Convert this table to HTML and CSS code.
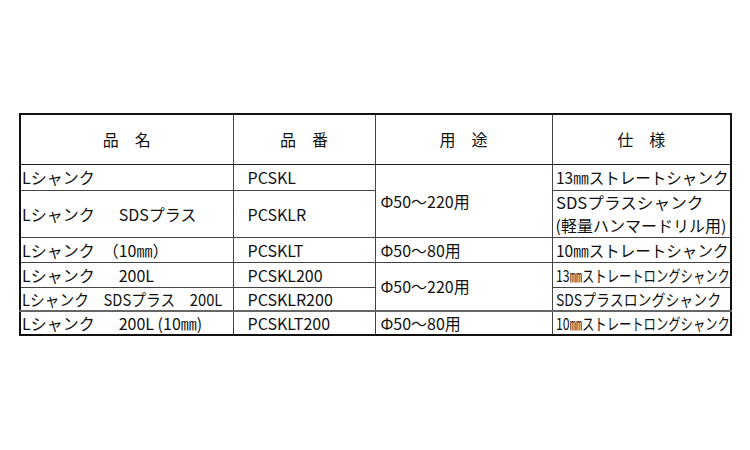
FILE: index.html
```html
<!DOCTYPE html>
<html lang="ja">
<head>
<meta charset="utf-8">
<title>Lシャンク 仕様表</title>
<link rel="stylesheet" href="styles.css">
</head>
<body>
<div class="wrap">
<table class="spec">
  <colgroup>
    <col class="c1"><col class="c2"><col class="c3"><col class="c4">
  </colgroup>
  <thead>
    <tr class="rh">
      <th>品　名</th>
      <th>品　番</th>
      <th>用　途</th>
      <th>仕　様</th>
    </tr>
  </thead>
  <tbody>
    <tr class="r1">
      <td class="name">Lシャンク</td>
      <td class="code">PCSKL</td>
      <td class="use" rowspan="2">Φ50〜220用</td>
      <td class="spc"><span class="sx sx97">13㎜ストレートシャンク</span></td>
    </tr>
    <tr class="r2">
      <td class="name">Lシャンク　&ensp;SDSプラス</td>
      <td class="code">PCSKLR</td>
      <td class="spc two"><span class="sx sx104">SDSプラスシャンク</span><br><span class="sx sx100">(軽量ハンマードリル用)</span></td>
    </tr>
    <tr class="r3">
      <td class="name">Lシャンク　（10㎜）</td>
      <td class="code">PCSKLT</td>
      <td class="use">Φ50〜80用</td>
      <td class="spc"><span class="sx sx97">10㎜ストレートシャンク</span></td>
    </tr>
    <tr class="r4">
      <td class="name">Lシャンク　&ensp;200L</td>
      <td class="code">PCSKL200</td>
      <td class="use" rowspan="2">Φ50〜220用</td>
      <td class="spc"><span class="sx sx77">13㎜ストレートロングシャンク</span></td>
    </tr>
    <tr class="r5">
      <td class="name"><span class="sx sx92">Lシャンク　SDSプラス　200L</span></td>
      <td class="code">PCSKLR200</td>
      <td class="spc"><span class="sx sx87">SDSプラスロングシャンク</span></td>
    </tr>
    <tr class="r6">
      <td class="name">Lシャンク　&ensp;200L (10㎜)</td>
      <td class="code">PCSKLT200</td>
      <td class="use">Φ50〜80用</td>
      <td class="spc"><span class="sx sx77">10㎜ストレートロングシャンク</span></td>
    </tr>
  </tbody>
</table>
</div>
</body>
</html>
```

FILE: styles.css
```css
html, body {
  margin: 0;
  padding: 0;
  background: #ffffff;
}

body {
  font-family: "Noto Sans CJK JP", "Noto Sans", sans-serif;
  color: #111111;
}

.wrap {
  padding: 113px 0 0 19px;
}

.spec {
  border-collapse: collapse;
  table-layout: fixed;
  width: 713px;
  border: 2px solid #111111;
  font-size: 16px;
  line-height: 20px;
}

.c1 { width: 213px; }
.c2 { width: 142px; }
.c3 { width: 177px; }
.c4 { width: 179px; }

.spec th,
.spec td {
  border: 1px solid #444444;
  padding: 0;
  white-space: nowrap;
  overflow: hidden;
  vertical-align: middle;
  font-weight: normal;
}

.spec th {
  text-align: center;
  border-bottom: 1px solid #222222;
}

.rh { height: 50px; }
.r1 { height: 26px; }
.r2 { height: 47px; }
.r3 { height: 25px; }
.r4 { height: 25px; }
.r5 { height: 24px; }
.r6 { height: 24px; }

.spec .r6 td { border-top: 2px solid #666666; }

.spec .name { padding-left: 1px; }
.spec .code { padding-left: 14px; }
.spec .use  { padding-left: 5px; }
.spec .spc  { padding-left: 3px; }
.spec .two  { line-height: 23px; }

.sx {
  display: inline-block;
  transform-origin: left center;
}

.sx104 { transform: scaleX(1.04); }
.sx100 { transform: scaleX(1); }
.sx97 { transform: scaleX(0.97); }
.sx92 { transform: scaleX(0.92); }
.sx87 { transform: scaleX(0.87); }
.sx77 { transform: scaleX(0.77); }
```
